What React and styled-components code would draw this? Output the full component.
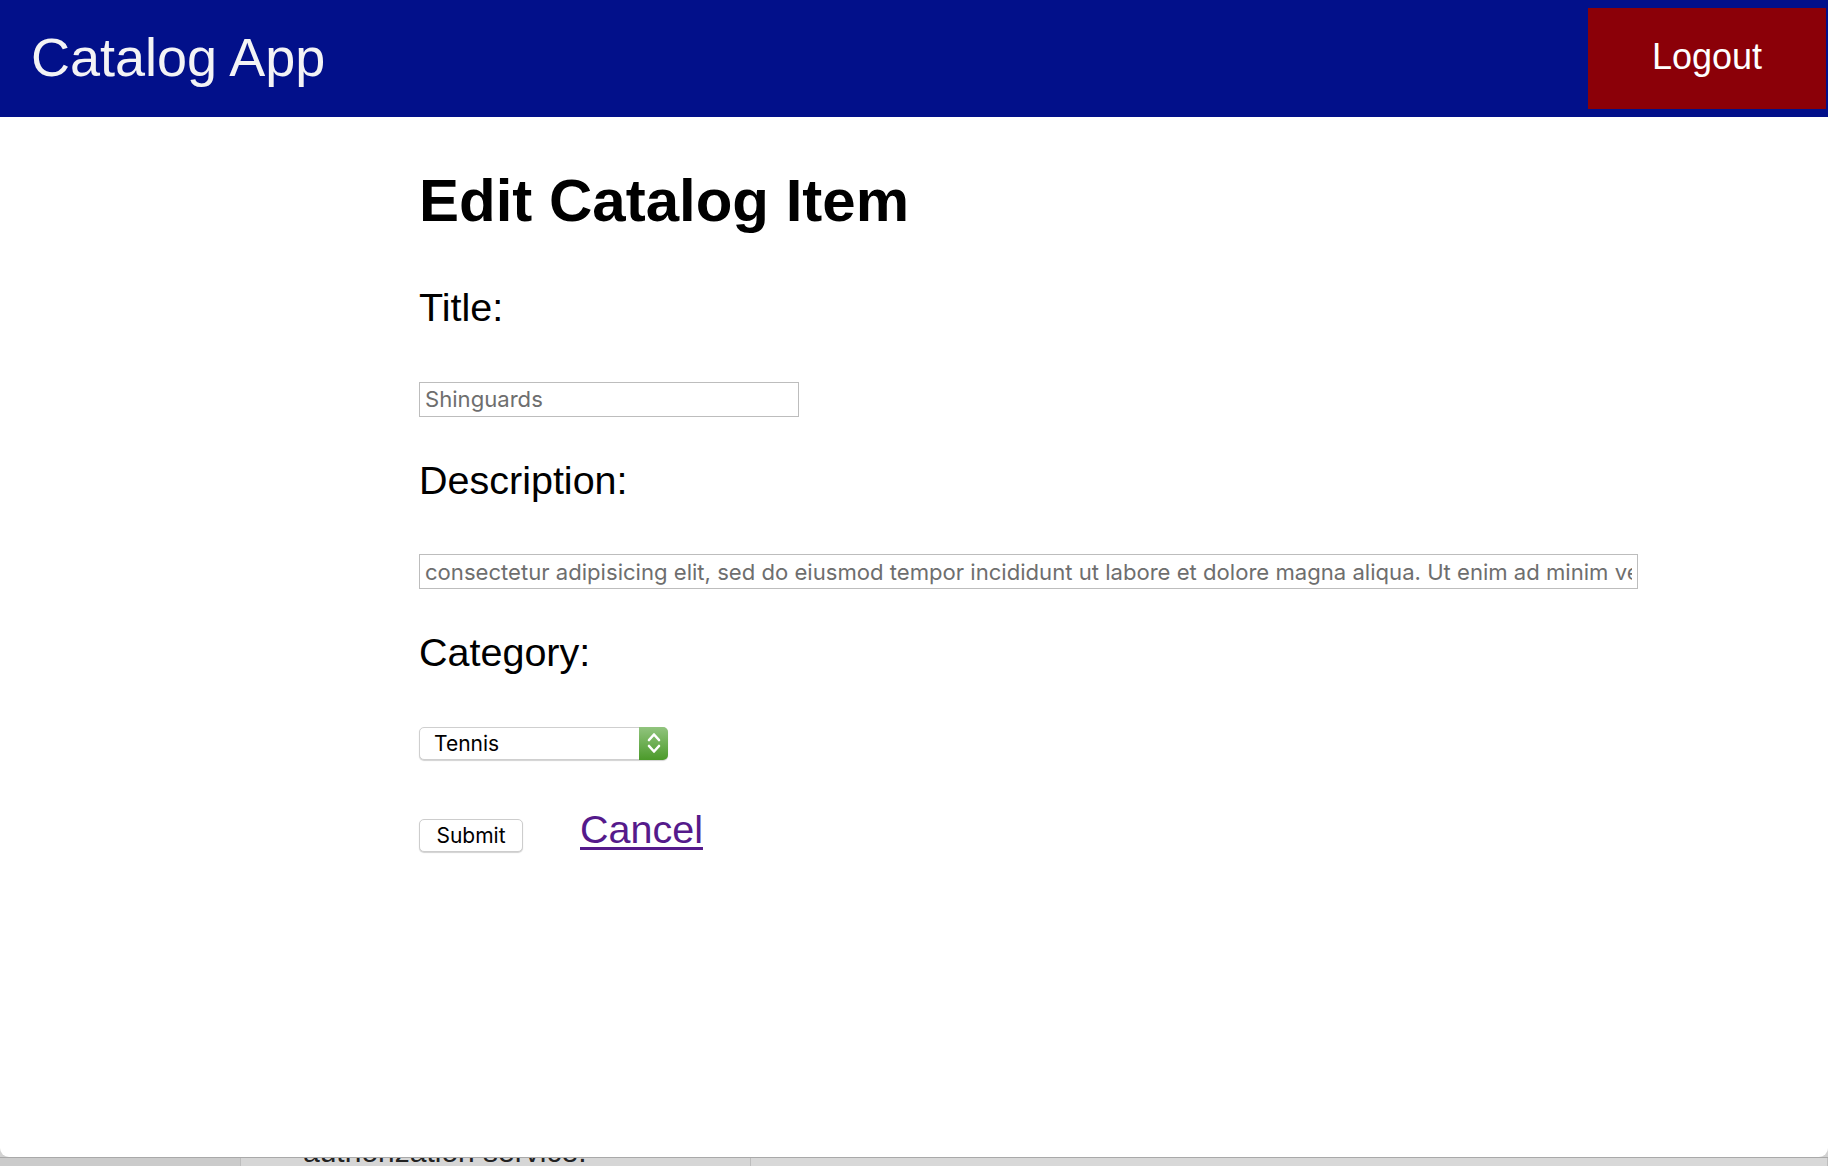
import React from "react";
import styled, { createGlobalStyle } from "styled-components";

const Global = createGlobalStyle`
  html, body { margin: 0; padding: 0; height: 1166px; overflow: hidden; }
  body {
    background: #d2d2d2;
    font-family: "Liberation Sans", Arial, sans-serif;
    width: 1828px;
  }
`;

const Page = styled.div`
  display: flex;
  flex-direction: column;
  height: 1166px;
  overflow: hidden;
`;

const Window = styled.div`
  height: 1157px;
  flex: none;
  background: #ffffff;
  border-radius: 0 0 9px 9px;
  overflow: hidden;
  display: flex;
  flex-direction: column;
`;

const Header = styled.header`
  height: 117px;
  flex: none;
  background: #02108a;
  display: flex;
  align-items: center;
  justify-content: space-between;
  padding-left: 31px;
  box-sizing: border-box;
`;

const Brand = styled.div`
  font-family: "Liberation Sans", Arial, sans-serif;
  font-size: 54px;
  line-height: 1;
  color: #f3f3f5;
  padding-bottom: 4px;
`;

const LogoutButton = styled.button`
  width: 238px;
  height: 101px;
  margin: 0 2px 0 0;
  border: none;
  background: #8b0008;
  color: #ffffff;
  font-family: "Liberation Sans", Arial, sans-serif;
  font-size: 36px;
  line-height: 1;
  padding: 0 0 4px;
  cursor: pointer;
`;

const Main = styled.main`
  padding: 54px 0 0 419px;
  display: flex;
  flex-direction: column;
  align-items: flex-start;
`;

const Heading = styled.h1`
  margin: 0 0 57px;
  font-family: "Liberation Sans", Arial, sans-serif;
  font-weight: 700;
  font-size: 60px;
  line-height: 1;
  color: #000;
`;

const Label = styled.label`
  display: block;
  margin: 0 0 54px;
  font-family: "Liberation Sans", Arial, sans-serif;
  font-size: 39.5px;
  line-height: 1;
  color: #000;
`;

const Field = styled.div`
  display: flex;
  flex-direction: column;
  align-items: flex-start;
  margin-bottom: ${(p) => p.$after}px;
`;

const TextInput = styled.input`
  box-sizing: border-box;
  width: ${(p) => p.$width}px;
  height: 35px;
  margin: 0;
  padding: 0 5px;
  border: 1px solid #bdbdbd;
  border-radius: 0;
  background: #fff;
  font-family: Inter, "Noto Sans", sans-serif;
  font-size: 22.1px;
  color: #6e6e6e;
  outline: none;
`;

const SelectWrap = styled.div`
  position: relative;
  width: 249px;
  height: 33px;
`;

const Select = styled.select`
  appearance: none;
  -webkit-appearance: none;
  box-sizing: border-box;
  width: 100%;
  height: 100%;
  margin: 0;
  padding: 1px 36px 0 14px;
  border: 1px solid #cfcfcf;
  border-radius: 5px;
  background: #fff;
  box-shadow: 0 1px 1px rgba(0, 0, 0, 0.18);
  font-family: Inter, "Noto Sans", sans-serif;
  font-size: 21px;
  color: #000;
  outline: none;
`;

const Stepper = styled.span`
  position: absolute;
  top: 0;
  right: 0;
  width: 29px;
  height: 33px;
  border-radius: 0 5px 5px 0;
  background: linear-gradient(#91c47e, #4b9a2a);
  display: flex;
  align-items: center;
  justify-content: center;
  pointer-events: none;
`;

const Actions = styled.div`
  display: flex;
  align-items: baseline;
  gap: 57px;
`;

const SubmitButton = styled.button`
  box-sizing: border-box;
  width: 104px;
  height: 33px;
  margin: 0;
  padding: 0;
  border: 1px solid #cdcdcd;
  border-radius: 5px;
  background: #fff;
  box-shadow: 0 1px 1px rgba(0, 0, 0, 0.18);
  font-family: Inter, "Noto Sans", sans-serif;
  font-size: 21px;
  color: #000;
`;

const CancelLink = styled.a`
  font-family: "Liberation Sans", Arial, sans-serif;
  font-size: 39.5px;
  line-height: 1;
  color: #551a8b;
  text-decoration: underline;
  text-decoration-thickness: 3px;
  text-underline-offset: 4px;
`;

const Strip = styled.div`
  flex: 1;
  display: grid;
  grid-template-columns: 241px 510px 1fr;
  border-top: 1px solid #a9a9a9;
  overflow: hidden;
`;

const StripCell = styled.div`
  background: ${(p) => p.$bg};
  border-right: 1px solid #bdbdbd;
  overflow: hidden;
  padding-left: ${(p) => p.$pad || 0}px;
`;

const StripText = styled.div`
  margin-top: -21px;
  font-family: "Liberation Sans", Arial, sans-serif;
  font-size: 30px;
  line-height: 30px;
  color: #222;
  white-space: nowrap;
`;

const Chevrons = () => (
  <svg width="16" height="28" viewBox="0 0 16 28" fill="none" stroke="#fff" strokeWidth="2.6" strokeLinecap="round" strokeLinejoin="round">
    <polyline points="3,11 8,5.5 13,11" />
    <polyline points="3,17 8,22.5 13,17" />
  </svg>
);

const description =
  "consectetur adipisicing elit, sed do eiusmod tempor incididunt ut labore et dolore magna aliqua. Ut enim ad minim veniam, quis nostrud exercitation ullamco laboris nisi ut aliquip ex ea commodo consequat.";

export default function App() {
  return (
    <>
      <Global />
      <Page>
        <Window>
          <Header>
            <Brand>Catalog App</Brand>
            <LogoutButton>Logout</LogoutButton>
          </Header>
          <Main>
            <Heading>Edit Catalog Item</Heading>
            <Field $after={44}>
              <Label htmlFor="title">Title:</Label>
              <TextInput id="title" $width={380} defaultValue="Shinguards" />
            </Field>
            <Field $after={44}>
              <Label htmlFor="description">Description:</Label>
              <TextInput id="description" $width={1219} defaultValue={description} />
            </Field>
            <Field $after={50}>
              <Label htmlFor="category">Category:</Label>
              <SelectWrap>
                <Select id="category" defaultValue="Tennis">
                  <option>Soccer</option>
                  <option>Basketball</option>
                  <option>Tennis</option>
                  <option>Hockey</option>
                </Select>
                <Stepper>
                  <Chevrons />
                </Stepper>
              </SelectWrap>
            </Field>
            <Actions>
              <SubmitButton type="submit">Submit</SubmitButton>
              <CancelLink href="#">Cancel</CancelLink>
            </Actions>
          </Main>
        </Window>
        <Strip>
          <StripCell $bg="#cbcbcb" />
          <StripCell $bg="#d6d6d6" $pad={62}>
            <StripText>authorization service.</StripText>
          </StripCell>
          <StripCell $bg="#d8d8d8" />
        </Strip>
      </Page>
    </>
  );
}
